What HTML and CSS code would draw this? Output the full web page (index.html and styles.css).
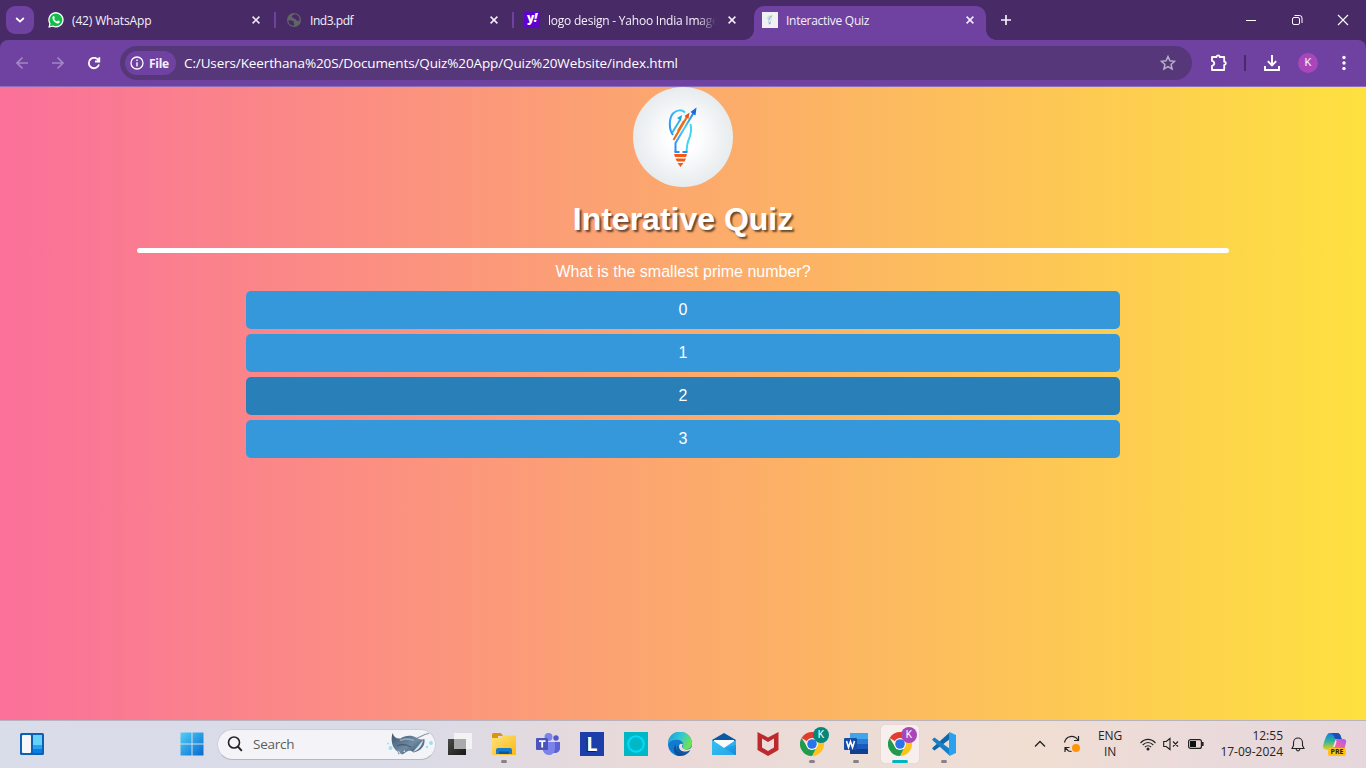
FILE: index.html
```html
<!DOCTYPE html>
<html lang="en">
<head>
<meta charset="utf-8">
<title>Interactive Quiz</title>
<link rel="stylesheet" href="styles.css">
</head>
<body>
<svg class="defs" width="0" height="0" aria-hidden="true">
  <defs>
    <linearGradient id="blueArrow" x1="0" y1="1" x2="1" y2="0"><stop offset="0" stop-color="#2a8cff"/><stop offset="1" stop-color="#3fd4f5"/></linearGradient>
    <linearGradient id="longArrow" gradientUnits="userSpaceOnUse" x1="42" y1="60" x2="62" y2="24"><stop offset="0" stop-color="#2a8cff"/><stop offset=".5" stop-color="#3fd4f5"/><stop offset="1" stop-color="#1c74e8"/></linearGradient>
    <linearGradient id="win" x1="0" y1="0" x2="1" y2="1"><stop offset="0" stop-color="#4fd0f8"/><stop offset="1" stop-color="#0669cf"/></linearGradient>
    <linearGradient id="folder" x1="0" y1="0" x2="1" y2="1"><stop offset="0" stop-color="#ffe27a"/><stop offset="1" stop-color="#fbb812"/></linearGradient>
    <linearGradient id="edgeTop" x1="0" y1="0" x2="1" y2=".4"><stop offset="0" stop-color="#159ad8"/><stop offset=".55" stop-color="#33c6d6"/><stop offset="1" stop-color="#6be257"/></linearGradient>
    <linearGradient id="mail" x1="0" y1="0" x2="1" y2="1"><stop offset="0" stop-color="#35c8f5"/><stop offset="1" stop-color="#1387dc"/></linearGradient>
    <linearGradient id="ray" x1="0" y1="0" x2="1" y2="1"><stop offset="0" stop-color="#3c536d"/><stop offset=".55" stop-color="#6f8ba3"/><stop offset="1" stop-color="#384a61"/></linearGradient>
    <linearGradient id="copA" x1="0" y1="0" x2="0" y2="1"><stop offset="0" stop-color="#1579e8"/><stop offset=".5" stop-color="#31b88f"/><stop offset="1" stop-color="#f3cc20"/></linearGradient>
    <linearGradient id="copB" x1="1" y1="0" x2="0" y2="1"><stop offset="0" stop-color="#a45cf0"/><stop offset=".6" stop-color="#f062a6"/><stop offset="1" stop-color="#ff9a5a"/></linearGradient>
    <linearGradient id="view" x1="0" y1="0" x2="1" y2="1"><stop offset="0" stop-color="#4a4a46"/><stop offset="1" stop-color="#181816"/></linearGradient>
    <symbol id="close" viewBox="0 0 8 8"><path d="M.6.6l6.8 6.8M7.4.6L.6 7.4" stroke="#f4effa" stroke-width="1.5" fill="none"/></symbol>
    <symbol id="bulb" viewBox="0 0 100 100">
      <g fill="none" stroke-width="2">
        <path d="M40 48C35.500 42 36 31 40 26.500c4-4 9-4 12-1" stroke="url(#blueArrow)"/>
        <path d="M42.500 65V56L60.500 26" stroke="url(#longArrow)"/>
        <path d="M39 46l8-13" stroke="#2eb6ed"/>
        <path d="M57.500 37c1.500 6 .5 10-1.500 15-2 4-2 7-2.500 13" stroke="#42d5ef"/>
        <path d="M40.500 53L54.500 29M45 44l6-10" stroke="#f16a17" stroke-width="2.200"/>
        <path d="M41.500 65h5M49.500 65h5" stroke="#278dff"/>
      </g>
      <path d="M63.500 20.500l-1 8-5-3.500z" fill="#1769e0"/>
      <path d="M56.500 25.500l-1 6.500-4-3z" fill="#e45713"/>
      <path d="M49 28l-1 6-4-3z" fill="#1da5df"/>
      <path d="M41 67h13l-1 3H42zM42.500 71.500h10.500l-1.500 3h-7.500zM44.500 76h6l-3 4z" fill="#f45a16"/>
    </symbol>
    <symbol id="chrome" viewBox="0 0 24 24">
      <path d="M12 12L1.600 6A12 12 0 0 1 22.400 6z" fill="#e33b2e"/>
      <path d="M12 6.500H22.700A12 12 0 0 1 12 24l4.800-9.300z" fill="#fcc31b"/>
      <path d="M1.600 6l5.600 9 5 2.600 4.600-2.900L12 24A12 12 0 0 1 1.600 6z" fill="#229a4b"/>
      <circle cx="12" cy="12" r="5.900" fill="#fff"/><circle cx="12" cy="12" r="4.800" fill="#2c72e8"/>
    </symbol>
  </defs>
</svg>

<header class="browser">
  <div class="tabstrip">
    <button class="tab-search"><svg width="10" height="6" viewBox="0 0 10 6"><path d="M1.200 1L5 4.600 8.800 1" fill="none" stroke="#fff" stroke-width="1.800"/></svg></button>
    <div class="tab">
      <svg class="favicon" viewBox="0 0 16 16"><path d="M.3 15.700l1-4A7.700 7.700 0 1 1 4.500 14.700z" fill="#fff"/><path d="M1.900 14.200l.7-2.700A6.400 6.400 0 1 1 4.800 13.500z" fill="#14bd49"/><path d="M5 4.300c.5-.5 1-.4 1.200 0l.6 1.400c.1.500-.7 1-.6 1.300.6 1.200 1.500 1.900 2.700 2.400.4 0 .8-1 1.200-.9l1.500.8c.4.300 0 1.400-.6 1.800-1.200.8-3 0-4.400-1.200C5.200 8.700 3.600 6.200 5 4.300z" fill="#fff"/></svg>
      <span class="tab-title t-whats">(42) WhatsApp</span><svg class="close"><use href="#close"/></svg>
    </div>
    <div class="tab">
      <svg class="favicon" viewBox="0 0 16 16"><circle cx="8" cy="8" r="7" fill="#626568"/><path d="M2.300 8.500c1.800-.4 3.600 0 5 .8 1 .7-.2 1.700.8 2.400.6.500-.2 1.300-.2 2C5 13.800 2.200 11.600 2.300 8.500zM8 2.300c-.8 1.200-2.300 1-2.300 2.400 0 1.100 1.700.4 2 1.600.3 1 1.900.3 2.200 1.300.3 1.200 1.800 1.600 3.500 1.300C14 5 11.600 2.300 8 2.300z" fill="#472a66"/></svg>
      <span class="tab-title t-pdf">Ind3.pdf</span><svg class="close"><use href="#close"/></svg>
    </div>
    <div class="tab no-sep">
      <span class="favicon yahoo">y<i>!</i></span>
      <span class="tab-title fade t-yahoo">logo design - Yahoo India Image</span><svg class="close"><use href="#close"/></svg>
    </div>
    <div class="tab active no-sep">
      <svg class="favicon paper" viewBox="0 0 100 100"><use href="#bulb"/></svg>
      <span class="tab-title t-quiz">Interactive Quiz</span><svg class="close"><use href="#close"/></svg>
    </div>
    <svg class="new-tab" viewBox="0 0 10 10"><path d="M5 0v10M0 5h10" stroke="#f4effa" stroke-width="1.700"/></svg>
    <div class="window-controls">
      <svg width="46" height="40"><path d="M18 20.500h10" stroke="#fff"/></svg>
      <svg width="46" height="40"><rect x="18.500" y="17.500" width="7" height="7" rx="1.500" fill="none" stroke="#fff"/><path d="M20.500 15.500h5a2.500 2.500 0 0 1 2.500 2.500v5" fill="none" stroke="#fff"/></svg>
      <svg width="46" height="40"><path d="M18 15l10 10M28 15L18 25" stroke="#fff" stroke-width="1.100"/></svg>
    </div>
  </div>
  <div class="toolbar-wrap">
    <div class="toolbar">
      <svg class="nav" viewBox="0 0 36 36"><path d="M28 18H17M22.500 12.500L17 18l5.500 5.500" class="dim"/></svg>
      <svg class="nav" viewBox="0 0 36 36"><path d="M16 18h11M21.500 12.500L27 18l-5.500 5.500" class="dim"/></svg>
      <svg class="nav" viewBox="0 0 36 36"><path d="M26.800 16A5.200 5.200 0 1 0 27 19.500M27.300 12.200v4.300H23" fill="none" stroke="#fff" stroke-width="1.800"/></svg>
      <div class="omnibox">
        <span class="chip"><svg width="14" height="14" viewBox="0 0 14 14"><circle cx="7" cy="7" r="6" fill="none" stroke="#fff" stroke-width="1.300"/><path d="M7 6.200v4.200M7 3.500v1.500" stroke="#fff" stroke-width="1.400"/></svg><span class="t-file">File</span></span>
        <span class="url">C:/Users/Keerthana%20S/Documents/Quiz%20App/Quiz%20Website/index.html</span>
        <svg class="star" viewBox="0 0 16 16"><path d="M8 1.500l1.900 4.300 4.700.5-3.500 3.100 1 4.600L8 11.600 3.900 14l1-4.600-3.500-3.100 4.700-.5z" fill="none" stroke="#b9adc8" stroke-width="1.500"/></svg>
      </div>
      <svg class="ext" viewBox="0 0 18 18"><path d="M2 3h4.500a1.600 1.600 0 0 1 3.200 0H14.200v4.700a1.600 1.600 0 0 1 0 3.200V16H2v-4.200c3-.7 3-4.200 0-4.900z" fill="none" stroke="#fff" stroke-width="1.800" stroke-linejoin="round"/></svg>
      <span class="divider"></span>
      <svg class="download" viewBox="0 0 16 16"><path d="M8 0v10M3.800 6.200L8 10.400l4.200-4.200M1 11v4h14v-4" fill="none" stroke="#fff" stroke-width="1.900"/></svg>
      <span class="avatar">K</span>
      <svg class="menu" viewBox="0 0 4 16"><circle cx="2" cy="2.500" r="1.700" fill="#fff"/><circle cx="2" cy="8" r="1.700" fill="#fff"/><circle cx="2" cy="13.500" r="1.700" fill="#fff"/></svg>
    </div>
  </div>
</header>

<main class="page">
  <svg class="logo" viewBox="0 0 100 100"><use href="#bulb"/></svg>
  <h1>Interative Quiz</h1>
  <div class="rule"></div>
  <p class="question">What is the smallest prime number?</p>
  <div class="options">
    <button class="option">0</button>
    <button class="option">1</button>
    <button class="option hover">2</button>
    <button class="option">3</button>
  </div>
</main>

<footer class="taskbar">
  <div class="widgets"><svg width="24" height="22" viewBox="0 0 24 22"><rect width="24" height="22" rx="1.500" fill="#0c61b5"/><rect x="2" y="2" width="9" height="18" rx="1" fill="#f7f7f7"/><rect x="13" y="2" width="9" height="11" fill="#66d1fb"/><path d="M13 12h9v4h-9z" fill="#24a4ef"/><path d="M13 16h9v4h-9z" fill="#0b7ce2"/></svg></div>
  <div class="cell start"><svg width="24" height="24" viewBox="0 0 24 24"><path d="M.5.500h11v11H.500zM12.500.500h11v11h-11zM.5 12.500h11v11H.500zM12.500 12.500h11v11h-11z" fill="url(#win)"/></svg></div>
  <div class="search">
    <svg width="16" height="16" viewBox="0 0 16 16"><circle cx="7" cy="6.500" r="5.500" fill="none" stroke="#222" stroke-width="1.600"/><path d="M10.800 10.500l4 4.300" stroke="#222" stroke-width="1.900"/></svg>
    <span class="t-search">Search</span>
    <svg class="ray" width="48" height="26" viewBox="0 0 48 26"><path d="M28 8c7 0 9-5 16-5.500" fill="none" stroke="#8495a6" stroke-width="1.200"/><path d="M7.500 2c1.500 4 4 6 8 5.500C20 4 27 4 31 6.500c3 2 6 2.500 8.500 1.500 1 7-4 12-11 13.500-2-2-5-2.500-8 0l-3 2-2-1-2 1-1-3C7 17 5.500 9 7.500 2z" fill="url(#ray)"/><path d="M38 9c-1 6-4 10-10 12 4-5 7-8 10-12zM13 19l2.500 3-1.500 1zM18 21l2-2v2z" fill="#d3e0ea"/><path d="M15 9.500c5-2 9-2 14 0" fill="none" stroke="#9fb4c6" stroke-width="1.800" opacity=".8"/><path d="M12 15q6-3 14 1" fill="none" stroke="#324459" stroke-width="1.200" opacity=".6"/><g fill="#8bdcf4" opacity=".85"><circle cx="5.500" cy="17" r="2"/><circle cx="3" cy="12.500" r="1"/><circle cx="46" cy="12" r="1.900"/><circle cx="42" cy="16" r="1.200"/></g></svg>
  </div>
  <div class="apps">
    <div class="cell"><svg width="24" height="24" viewBox="0 0 24 24"><path d="M0 7h18v16H0z" fill="url(#view)"/><path d="M6 1h18v16H6z" fill="#f3f3f3"/><path d="M6 7h12v10H6z" fill="#aaa"/></svg></div>
    <div class="cell running"><svg width="24" height="24" viewBox="0 0 24 24"><path d="M0 2.500Q0 1 1.500 1H9l2 3h-5v5H0z" fill="#dc9509"/><path d="M0 6h8l3-2.500h12q1 0 1 1V22q0 1-1 1H1q-1 0-1-1z" fill="url(#folder)"/><path d="M4 22v-4q0-2 2-2h12q2 0 2 2v4z" fill="#147bcf"/><path d="M7 19.500h10V22H7z" fill="#0d559f"/></svg></div>
    <div class="cell"><svg width="24" height="24" viewBox="0 0 24 24"><circle cx="12.500" cy="5" r="4" fill="#7b83eb"/><circle cx="20" cy="6" r="2.700" fill="#5059c9"/><path d="M16 10h8v7q-1 4-5 4h-3z" fill="#5b63d3"/><path d="M8 10h11v7q-1 6-6 6-4 0-6-4z" fill="#7b83eb"/><rect y="6" width="12" height="12" rx="1" fill="#4b53bc"/><path d="M3 9.200h6.500M6.200 9.200v6.300" stroke="#fff" stroke-width="1.800"/></svg></div>
    <div class="cell"><span class="letter-l">L</span></div>
    <div class="cell"><svg width="24" height="24" viewBox="0 0 24 24"><path d="M0 0h24v24H0z" fill="#00b7c3"/><circle cx="12" cy="12" r="7.800" fill="none" stroke="#00dcff" stroke-width="2"/><path d="M8 18.500l4 .5v2z" fill="#00dcff"/></svg></div>
    <div class="cell"><svg width="24" height="24" viewBox="0 0 24 24"><circle cx="12" cy="12" r="12" fill="#127bd0"/><path d="M0 12A12 12 0 0 1 24 11c0 5-3 6-6 6-4 0-4-2-3-3 1-5-4-7-8-6-3 0-6 2-7 4z" fill="url(#edgeTop)"/><path d="M8 12c-2 6 4 11 12 9a12 12 0 0 1-8 3C6 24 4 16 8 12z" fill="#0c509c"/><path d="M15 12.500c-2 1.500-1 5 3.500 5 2.500 0 4.500-1 6.500-3.500v5l-3 .5c-6 2-11-.5-11-5 0-2.500 2-3.500 4-2z" fill="#ecdcda"/><path d="M10.500 13.500c-.5 5 5 8 12 4.500-3 5-9 5.500-12.500 1-2-3-.5-5.500.5-5.500z" fill="#12579f"/></svg></div>
    <div class="cell"><svg width="24" height="24" viewBox="0 0 24 24"><path d="M0 8L12 1l12 7v5H0z" fill="#0c59a4"/><path d="M2 8h20v8H2z" fill="#fafafa"/><path d="M0 8l12 8 12-8v15H0z" fill="url(#mail)"/><path d="M0 8l12 8 12-8v5L12 16 24 23H0z" fill="#35bdf2" opacity=".55"/></svg></div>
    <div class="cell"><svg width="24" height="24" viewBox="0 0 24 24"><path d="M1.500 0L12 5.500 22.500 0v18L12 24 1.500 18z" fill="#bd2a2e"/><path d="M6 6.500l6 3.500 6-3.500v9L12 19l-6-3.500z" fill="#ecdcda"/></svg></div>
    <div class="cell running"><svg width="24" height="24"><use href="#chrome"/></svg><span class="badge green">K</span></div>
    <div class="cell running"><svg width="24" height="24" viewBox="0 0 24 24"><path d="M6 1h18v6H6z" fill="#41a5ee"/><path d="M6 7h18v5H6z" fill="#2b7cd3"/><path d="M6 12h18v5H6z" fill="#185abd"/><path d="M6 17h18v5H6z" fill="#103f91"/><rect y="6" width="13" height="12" rx="1" fill="#174da6"/><path d="M2.500 9l2 6.500L6.500 9.500l2 6L10.500 9" fill="none" stroke="#fff" stroke-width="1.600"/></svg></div>
    <div class="cell running current"><svg width="24" height="24"><use href="#chrome"/></svg><span class="badge purple">K</span></div>
    <div class="cell running"><svg width="24" height="24" viewBox="0 0 24 24"><path d="M17.500.5L.8 15.500q-1 1 0 1.800l1.700 1.200L18 7z" fill="#0b68ad"/><path d="M17.500 23.500L.8 8.500q-1-1 0-1.800l1.700-1.200L18 17z" fill="#167fc8"/><path d="M17.500 0L24 3v18l-6.500 3q-.5-.3-.5-1V1q0-.7.5-1z" fill="#29a1ee"/></svg></div>
  </div>
  <div class="tray">
    <svg class="chev" width="12" height="8" viewBox="0 0 12 8"><path d="M1 6.500L6 1.500l5 5" fill="none" stroke="#222" stroke-width="1.300"/></svg>
    <svg class="sync" width="18" height="18" viewBox="0 0 18 18"><path d="M1.500 7.500C3 .500 11-.5 15 5M15.500 1v4.500H11M6.500 12.500H2V17M2.500 13l3 3 3 .5" fill="none" stroke="#222" stroke-width="1.200"/><circle cx="13" cy="13" r="4" fill="#ff9408"/></svg>
    <div class="lang"><span class="t-eng">ENG</span><span class="t-in">IN</span></div>
    <svg class="wifi" width="16" height="13" viewBox="0 0 16 13"><g fill="none" stroke="#222" stroke-width="1.100"><path d="M.5 5C5 .2 11 .2 15.500 5M2.700 7C6 3.600 10 3.600 13.300 7M4.800 9.200c2-2 4.400-2 6.400 0"/></g><circle cx="8" cy="11" r="1.500" fill="#222"/></svg>
    <svg class="vol" width="16" height="14" viewBox="0 0 16 14"><path d="M.7 4.500h2.500L7 1.500v11L3.200 9.500H.700zM10 4.500l5 5M15 4.500l-5 5" fill="none" stroke="#222" stroke-width="1.100"/></svg>
    <svg class="bat" width="16" height="10" viewBox="0 0 16 10"><rect x=".6" y=".6" width="12.800" height="8.800" rx="2" fill="none" stroke="#222" stroke-width="1.200"/><rect x="2" y="2" width="6" height="6" fill="#111"/><path d="M14.700 3v4" stroke="#222" stroke-width="1.800"/></svg>
    <div class="clock"><span class="t-time">12:55</span><span class="t-date">17-09-2024</span></div>
    <svg class="bell" width="14" height="15" viewBox="0 0 14 15"><path d="M1 11.500l1.500-3V5.500a4.500 4.500 0 0 1 9 0v3l1.500 3zM5 12q2 4 4 0" fill="none" stroke="#222" stroke-width="1.100"/></svg>
    <div class="copilot"><svg width="24" height="24" viewBox="0 0 24 24"><path d="M6 1h8q3 0 4 4l-5 1-4 12H5q-5 0-5-4Q3 2 6 1z" fill="url(#copA)"/><path d="M14 1q3 0 4 4l1 2h-7q-1-4-4-6z" fill="#1750b8"/><path d="M14 7h6q4 0 3 4l-2 7H8q2 0 3-5 1-5 3-6z" fill="url(#copB)"/><path d="M13 9l-2 6" stroke="#f3e4e6" stroke-width="1.500"/></svg><span class="pre">PRE</span></div>
  </div>
</footer>
</body>
</html>
```
FILE: styles.css
```css
* { box-sizing: border-box; }
body { margin: 0; width: 1366px; height: 768px; overflow: hidden; display: flex; flex-direction: column; font-family: "Open Sans", "Noto Sans", sans-serif; font-size: 12px; }
svg { display: block; flex: none; }
.defs { position: absolute; }
button { border: 0; padding: 0; }
span { white-space: nowrap; }

.browser { height: 87px; flex: none; background: #472a66; color: #f5f0fa; }
.tabstrip { height: 40px; display: flex; align-items: center; padding-left: 6px; }
.tab-search { width: 28px; height: 28px; border-radius: 9px; background: #6f42a1; display: grid; place-items: center; margin-right: 6px; }
.tab { position: relative; width: 238px; height: 34px; margin-top: 6px; padding: 0 0 6px 8px; display: flex; align-items: center; flex: none; }
.tab:not(.no-sep)::after { content: ""; position: absolute; right: 2px; top: 6px; width: 2px; height: 16px; background: #6f42a1; }
.favicon { width: 16px; height: 16px; flex: none; }
.tab-title { width: 170px; margin-left: 8px; overflow: hidden; font-weight: 450; }
.tab .close { width: 8px; height: 8px; margin-left: 10px; }
.fade { -webkit-mask-image: linear-gradient(to right, #000 150px, transparent 168px); mask-image: linear-gradient(to right, #000 150px, transparent 168px); }
.yahoo { background: #5f01d1; color: #fff; font: 800 12px/12px "Open Sans", sans-serif; text-align: center; letter-spacing: -.5px; }
.tab.active { width: 232px; border-radius: 10px 10px 0 0; background: #6f42a1; }
.tab.active::before, .tab.active::after { content: ""; position: absolute; bottom: 0; width: 10px; height: 10px; }
.tab.active::before { left: -10px; background: radial-gradient(circle at 0 0, transparent 9.500px, #6f42a1 10px); }
.tab.active::after { right: -10px; background: radial-gradient(circle at 100% 0, transparent 9.500px, #6f42a1 10px); }
.paper { background: #eef2f3; }
.new-tab { width: 10px; height: 10px; margin-left: 15px; }
.window-controls { display: flex; margin-left: auto; }
.toolbar-wrap { height: 47px; }
.toolbar { height: 47px; border-radius: 8px 8px 0 0; border-bottom: 1px solid #8b6db8; background: #6f42a1; display: flex; align-items: center; }
.nav { width: 36px; height: 36px; }
.dim { fill: none; stroke: #a386c4; stroke-width: 1.700; }
.omnibox { width: 1072px; height: 34px; margin-left: 12px; border-radius: 17px; background: #56377a; display: flex; align-items: center; padding: 0 16px 0 5px; flex: none; }
.chip { width: 51px; height: 24px; border-radius: 12px; background: #6f42a1; display: flex; align-items: center; gap: 5px; padding-left: 5px; font-weight: 700; letter-spacing: -.3px; }
.url { margin-left: 8px; font-size: 13.500px; color: #fff; letter-spacing: -.12px; }
.star { width: 16px; height: 16px; margin-left: auto; }
.ext { width: 18px; height: 18px; margin-left: 18px; }
.divider { width: 2px; height: 16px; margin-left: 16px; background: #472a66; }
.download { width: 16px; height: 16px; margin-left: 18px; }
.avatar { width: 20px; height: 20px; border-radius: 50%; margin-left: 18px; background: #a946b9; font: 11px/20px Roboto, sans-serif; text-align: center; }
.menu { width: 4px; height: 16px; margin-left: 24px; }

.page { flex: 1; background: linear-gradient(to right, #fa709a, #fee140); display: flex; flex-direction: column; align-items: center; font-family: "Liberation Sans", Arial, sans-serif; color: #fff; }
.logo { width: 100px; height: 100px; border-radius: 50%; background: radial-gradient(circle, #fff 0 20%, #e0e6e9 85%); }
h1 { margin: 14px 0 10px; font-size: 32px; line-height: 37px; text-shadow: 2px 2px 2px rgba(0,0,0,.6); }
.rule { width: 80%; height: 5px; border-radius: 3px; background: #fff; }
.question { margin: 10px 0; font-size: 16px; line-height: 18px; }
.options { width: 64%; display: flex; flex-direction: column; gap: 5px; }
.option { height: 38px; border-radius: 5px; background: #3498db; color: #fff; font: 16px "Liberation Sans", Arial, sans-serif; }
.option.hover { background: #2980b9; }

.taskbar { height: 48px; flex: none; box-shadow: inset 0 1px 0 #b7b4bf; background: linear-gradient(to right, #d9dce9 0, #dadbe7 30%, #ead9d8 48%, #ecdcd7 62%, #f0ded2 76%, #eadadb 88%, #e5d7dc 100%); display: flex; align-items: center; color: #242424; }
.widgets { width: 169px; padding-left: 20px; }
.cell { position: relative; width: 44px; height: 48px; display: grid; place-items: center; flex: none; }
.start { left: .5px; }
.search { width: 219px; height: 31px; margin: 0 2px 0 4px; border-radius: 16px; border: 1px solid #cdced8; border-bottom-color: #b6b7c2; background: #f4f4f8; display: flex; align-items: center; padding: 0 0 0 9px; font-size: 13.500px; color: #5c5c5c; letter-spacing: -.25px; }
.search .t-search { margin-left: 10px; }
.ray { margin-left: auto; margin-right: 2px; }
.apps { display: flex; }
.cell > svg { z-index: 1; }
.running::after { content: ""; position: absolute; left: 19px; bottom: 5px; width: 6px; height: 3px; border-radius: 2px; background: #858187; }
.current::before { content: ""; position: absolute; inset: 5px 3px; border-radius: 4px; background: #f7efed; box-shadow: 0 0 1px #c8b9b8; }
.current::after { left: 14px; width: 16px; background: #00b5c2; }
.badge { position: absolute; z-index: 2; left: 23px; top: 7px; width: 16px; height: 16px; border-radius: 50%; color: #fff; font: 10px/16px Roboto, sans-serif; text-align: center; }
.green { background: #078777; }
.purple { background: #a946b9; }
.letter-l { width: 24px; height: 24px; background: #1b3eaa; color: #fff; font: bold 20px/23px "Open Sans", sans-serif; text-align: center; text-shadow: -1px 1px 0 #111d46; }
.tray { display: flex; align-items: center; margin-left: 68px; }
.sync { margin-left: 17px; }
.lang { width: 36px; margin-left: 11px; display: flex; flex-direction: column; align-items: center; line-height: 16px; letter-spacing: -.2px; }
.wifi { margin-left: 12px; }
.vol { margin-left: 7px; }
.bat { margin-left: 9px; }
.clock { width: 72px; margin-left: 7px; display: flex; flex-direction: column; align-items: flex-end; line-height: 16px; }
.bell { margin-left: 8px; }
.copilot { position: relative; margin-left: 18px; }
.pre { position: absolute; left: 5px; top: 16px; width: 18px; height: 8px; border-radius: 2px; background: #ffc315; color: #222; font: bold 7px/8px "Open Sans", sans-serif; text-align: center; }

.t-whats { letter-spacing: -.15px; }
.t-pdf { letter-spacing: -.45px; }
.t-yahoo { letter-spacing: -.22px; }
.t-quiz { letter-spacing: -.28px; }
```
